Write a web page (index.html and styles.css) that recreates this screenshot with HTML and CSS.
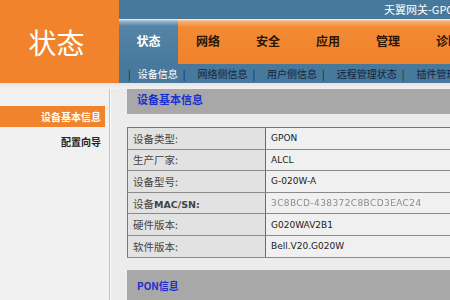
FILE: index.html
```html
<!DOCTYPE html>
<html lang="zh-CN">
<head>
    <meta charset="UTF-8">
    <title>状态</title>
    <link rel="stylesheet" href="styles.css">
</head>
<body>

<div class="header">
    <div class="logo">状态</div>
    <div class="header-right">
        <div class="topbar">天翼网关-GPON</div>
        <div class="tabs">
            <div class="tab active">状态</div>
            <div class="tab">网络</div>
            <div class="tab">安全</div>
            <div class="tab">应用</div>
            <div class="tab">管理</div>
            <div class="tab">诊断</div>
        </div>
        <div class="subnav">
            <span class="sep first">|</span><span class="sub current">设备信息</span>
            <span class="sep">|</span><span class="sub">网络侧信息</span>
            <span class="sep">|</span><span class="sub">用户侧信息</span>
            <span class="sep">|</span><span class="sub">远程管理状态</span>
            <span class="sep">|</span><span class="sub">插件管理</span>
        </div>
    </div>
</div>

<div class="strip"></div>

<div class="main">
    <div class="sidebar">
        <div class="menu-item selected">设备基本信息</div>
        <div class="menu-item">配置向导</div>
    </div>

    <div class="content">
        <div class="section-title">设备基本信息</div>

        <table class="info">
            <tr><td class="label">设备类型:</td><td class="value">GPON</td></tr>
            <tr><td class="label">生产厂家:</td><td class="value">ALCL</td></tr>
            <tr><td class="label">设备型号:</td><td class="value">G-020W-A</td></tr>
            <tr><td class="label">设备<b class="latin">MAC/SN:</b></td><td class="value blurred">3C8BCD-438372C8BCD3EAC24</td></tr>
            <tr><td class="label">硬件版本:</td><td class="value">G020WAV2B1</td></tr>
            <tr><td class="label">软件版本:</td><td class="value">Bell.V20.G020W</td></tr>
        </table>

        <div class="section-title pon">PON信息</div>
    </div>
</div>

</body>
</html>
```

FILE: styles.css
```css
* {
    margin: 0;
    padding: 0;
    box-sizing: border-box;
}

body {
    width: 450px;
    height: 300px;
    overflow: hidden;
    background: #efefef;
    font-family: "Noto Sans CJK SC", sans-serif;
}

/* Header */
.header {
    display: flex;
    height: 83px;
}

.logo {
    width: 119px;
    flex-shrink: 0;
    display: flex;
    align-items: center;
    justify-content: center;
    padding-right: 6px;
    background: #f0832b;
    color: #fff;
    font-size: 28px;
}

.header-right {
    flex: 1;
    display: flex;
    flex-direction: column;
    overflow: hidden;
    background: #46799c;
}

.topbar {
    height: 19px;
    padding-left: 265px;
    color: #fff;
    font-size: 11px;
    line-height: 19px;
    white-space: nowrap;
}

.tabs {
    display: flex;
    height: 45px;
    white-space: nowrap;
}

.tab {
    flex: 0 0 60px;
    display: flex;
    align-items: center;
    justify-content: center;
    padding-bottom: 2px;
    font-size: 12px;
    font-weight: bold;
    color: #2b1605;
    background: linear-gradient(#fff6ee 0, #f7b27a 2px, #f28a34 8px, #f0832b 100%);
}

.tab.active {
    flex-basis: 59px;
    color: #fff;
    background: linear-gradient(#f4f8fb 0, #9bb7cb 2px, #5585a6 7px, #46799c 100%);
}

.subnav {
    height: 19px;
    display: flex;
    align-items: center;
    padding-left: 9px;
    font-size: 10px;
    white-space: nowrap;
    color: #15233d;
}

.sep {
    margin-right: 12px;
}

.sep.first {
    margin-right: 7px;
}

.sub {
    margin-right: 5px;
}

.sub.current {
    color: #fff;
}

.strip {
    height: 6px;
    background: linear-gradient(#e4e4e4, #f2f2f2);
}

/* Main area */
.main {
    display: flex;
}

.sidebar {
    width: 110px;
    flex-shrink: 0;
    height: 211px;
    padding-top: 17px;
    border-right: 1px solid #c4c4c4;
    background: #f1f1f1;
}

.menu-item {
    width: 105px;
    height: 21px;
    padding-right: 4px;
    margin-bottom: 4px;
    text-align: right;
    font-size: 10px;
    font-weight: bold;
    line-height: 21px;
    color: #222;
}

.menu-item.selected {
    background: #f0832b;
    color: #fff;
}

.content {
    flex: 1;
    padding-left: 16px;
    border-left: 1px solid #fafafa;
    background: #ececec;
}

.section-title {
    height: 25px;
    padding: 2px 0 0 10px;
    background: #a8a8a8;
    color: #1a2fd0;
    font-size: 11px;
    font-weight: bold;
}

.section-title.pon {
    height: 32px;
    padding-top: 8px;
    font-size: 10px;
}

.info {
    width: 100%;
    margin: 13px 0 12px;
    border-collapse: collapse;
    border-left: 1px solid #777;
    border-top: 1px solid #777;
}

.info td {
    height: 21.6px;
    padding: 0 0 0 5px;
    border-bottom: 1px solid #8a8a8a;
    font-size: 10.5px;
    white-space: nowrap;
}

.label {
    width: 138px;
    background: #e2e2e2;
    color: #444;
    border-right: 1px solid #6a6a6a;
}

.latin {
    font-family: "DejaVu Sans", sans-serif;
    font-size: 9.5px;
}

.info td.value {
    background: #f0f0f0;
    color: #1a1a1a;
    font-family: "DejaVu Sans", sans-serif;
    font-size: 9px;
}

.info td.blurred {
    color: #8c8c8c;
    letter-spacing: 0.4px;
    filter: blur(0.4px);
}
```
